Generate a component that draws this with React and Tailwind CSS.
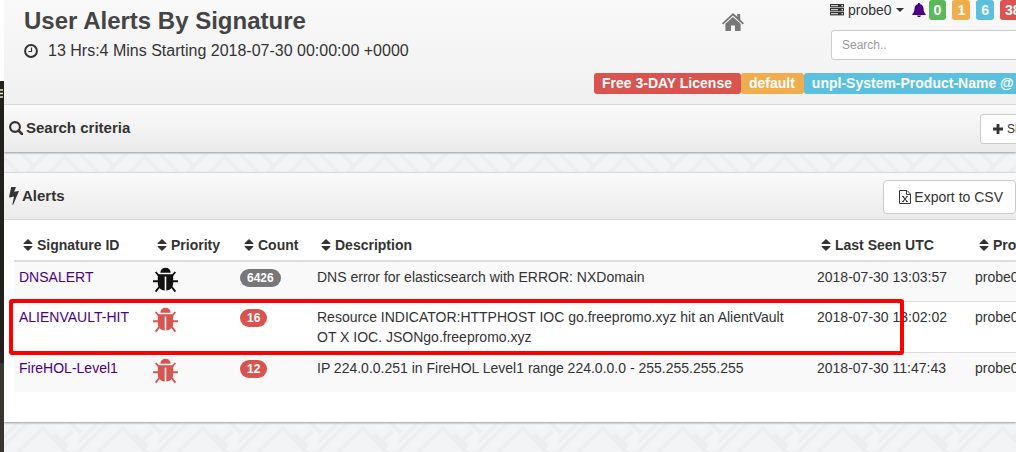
import React from "react";

const PANEL_HEAD =
  "flex items-center justify-between border-t border-[#d9d9d9] bg-linear-to-b from-[#fafafa] to-[#ebebeb]";
const PANEL_SHADOW = "shadow-[0_1px_2px_#999999]";

function ClockIcon() {
  return (
    <svg viewBox="0 0 14 14" className="size-3.5 shrink-0" fill="none" stroke="currentColor" aria-hidden="true">
      <circle cx="7" cy="7" r="5.9" strokeWidth="2" />
      <path d="M7.5 3.5v4H4.5" strokeWidth="1.2" />
    </svg>
  );
}

function HomeIcon() {
  return (
    <svg viewBox="0 0 22 18" className="h-[18px] w-[22px]" fill="currentColor" aria-hidden="true">
      <path d="M11 0 L15.2 3.8 V1 H18.2 V6.6 L22 10.2 L20.8 11.4 L11 2.6 L1.2 11.4 L0 10.2 Z" />
      <path d="M11 4 L18.6 10.8 V18 H13 V12.5 H9 V18 H3.4 V10.8 Z" />
    </svg>
  );
}

function ServerIcon() {
  return (
    <svg viewBox="0 0 14 12" className="h-3 w-3.5 shrink-0" aria-hidden="true">
      {[0, 4, 8].map((y) => (
        <g key={y}>
          <rect x="0" y={y} width="14" height="3.4" fill="#333" />
          <rect x="1" y={y + 1.2} width="7" height="1" fill="#eee" />
          <rect x="11.5" y={y + 1} width="1.4" height="1.4" fill="#eee" />
        </g>
      ))}
    </svg>
  );
}

function BellIcon() {
  return (
    <svg viewBox="0 0 14 14" className="size-3.5 shrink-0" fill="#4b0082" aria-hidden="true">
      <path d="M7 0c.8 0 1.2.5 1.2 1.2C10.4 1.8 11.2 3.2 11.4 5l.5 3.2c.2 1.200 1 2 1.800 2.800v1H.3v-1c.8-.8 1.600-1.600 1.800-2.800L2.600 5C2.800 3.200 3.600 1.800 5.800 1.200 5.800.5 6.200 0 7 0z" />
      <path d="M5 12.500h4c-.2 1-1 1.500-2 1.500s-1.800-.5-2-1.500z" />
    </svg>
  );
}

function SearchIcon() {
  return (
    <svg viewBox="0 0 14 14" className="size-3.5 shrink-0" fill="none" stroke="currentColor" aria-hidden="true">
      <circle cx="6" cy="6" r="4.900" strokeWidth="2.100" />
      <path d="M9.500 9.500 13 13" strokeWidth="2.500" strokeLinecap="round" />
    </svg>
  );
}

function BoltIcon() {
  return (
    <svg viewBox="0 0 10 18" className="h-[18px] w-2.5 shrink-0" fill="currentColor" aria-hidden="true">
      <path d="M2.200 0H7L5.200 4.800l4.200-.9c.4 0 .6.300.4.7L4.200 17.700c-.2.400-.9.300-.8-.2L5 9.400.7 10.400c-.4 0-.7-.2-.6-.6z" />
    </svg>
  );
}

function PlusIcon() {
  return (
    <svg viewBox="0 0 10 10" className="size-2.5 shrink-0" fill="currentColor" aria-hidden="true">
      <path d="M3.600 0h2.800v3.600H10v2.800H6.400V10H3.600V6.400H0V3.600h3.600z" />
    </svg>
  );
}

function ExcelIcon() {
  return (
    <svg viewBox="0 0 12 14" className="h-3.5 w-3 shrink-0" fill="none" stroke="currentColor" aria-hidden="true">
      <path d="M.5 .5H8L11.500 4V13.500H.5z" />
      <path d="M7.500.5V4.500H11.500" />
      <path d="M4 6.500 8 11.500M8 6.500 4 11.500" strokeWidth="1.200" />
      <path d="M3 6.500h2M7 6.500h2M3 11.500h2M7 11.500h2" strokeWidth=".8" />
    </svg>
  );
}

function SortIcon() {
  return (
    <svg viewBox="0 0 10 12" className="h-3 w-2.5 shrink-0" fill="currentColor" aria-hidden="true">
      <path d="M5 0 9.400 4.300V5H.6v-.7zM5 12 .6 7.700V7h8.800v.7z" />
    </svg>
  );
}

function BugIcon({ className }) {
  return (
    <svg viewBox="0 0 26 26" className={"mb-[3px] h-[26px] w-[26px] " + className} fill="currentColor" aria-hidden="true">
      <path d="M7.300 5.800C7.600 2.600 9.600.8 12.500.8s4.900 1.800 5.200 5z" />
      <path d="M4.800 7.200H20.200V16c0 4.400-2.400 7-6.900 7.600V9.600h-1.600v14C7.200 23 4.800 20.400 4.800 16z" />
      <path
        d="M6 9 2.700 5M19 9 22.300 5M5 14.300H0M20 14.300h5M6.200 20 2.600 24.600M18.800 20l3.600 4.600"
        fill="none"
        stroke="currentColor"
        strokeWidth="1.900"
      />
    </svg>
  );
}

const WEAVE_OFFSETS = [-80, 0, 80].flatMap((x) => [0, 80].map((y) => ({ x, y })));

function Backdrop() {
  return (
    <svg className="absolute inset-0 h-full w-full" aria-hidden="true">
      <defs>
        <pattern id="weave" x="-4" width="80" height="80" patternUnits="userSpaceOnUse">
          <g fill="none" stroke="#edeef0" strokeWidth="4">
            {WEAVE_OFFSETS.map(({ x, y }) => (
              <path
                key={x + ":" + y}
                transform={`translate(${x} ${y})`}
                d="M-4 54 30 20M14 56 43 28 70 56M54 34 67 47M60 42 73 31M66 18 81 33M78 43 101 20M1 -5 18 12M20 -8 35 7M27 13 48 -8M47 15 65 -3 83 15"
              />
            ))}
          </g>
        </pattern>
      </defs>
      <rect width="100%" height="100%" fill="#f3f4f6" />
      <rect width="100%" height="100%" fill="url(#weave)" />
    </svg>
  );
}

function Sidebar() {
  return (
    <nav aria-label="Main menu" className="flex w-1 shrink-0 flex-col">
      <div className="h-[81px] bg-[#fdfdfd]" />
      <div className="h-[282px] bg-[#22201c] pt-2">
        <svg viewBox="0 0 4 9" className="h-[9px] w-1" stroke="#e8e4c8" strokeWidth="1.500" aria-hidden="true">
          <path d="M0 1h3M0 4.500h3M0 8h3" />
        </svg>
      </div>
      <div className="flex-1 bg-[#383530]" />
    </nav>
  );
}

const COUNTERS = [
  { value: "0", color: "bg-[#5cb85c]" },
  { value: "1", color: "bg-[#f0ad4e]" },
  { value: "6", color: "bg-[#5bc0de]" },
  { value: "38", color: "bg-[#d9534f]" },
];

const LABELS = [
  { text: "Free 3-DAY License", color: "bg-[#d9534f]" },
  { text: "default", color: "bg-[#f0ad4e]" },
  { text: "unpl-System-Product-Name @", color: "bg-[#5bc0de]" },
];

function Header() {
  return (
    <header className="bg-linear-to-b from-[#f9f9f9] to-[#f0f0f0] pb-2.5">
      <div className="flex h-[60px]">
        <div className="min-w-0 flex-1 pl-5 whitespace-nowrap">
          <h1 className="pt-1 text-2xl leading-[33px] font-bold text-[#444]">User Alerts By Signature</h1>
          <p className="flex items-center gap-2.5 text-base leading-7">
            <ClockIcon />
            13 Hrs:4 Mins Starting 2018-07-30 00:00:00 +0000
          </p>
        </div>
        <a href="#home" aria-label="Home" className="mt-[13px] mr-[86px] h-fit text-[#777]">
          <HomeIcon />
        </a>
        <div className="w-[186px] shrink-0 overflow-hidden">
          <div className="flex h-5 items-center">
            <button type="button" className="flex items-center gap-1">
              <ServerIcon />
              probe0
              <svg viewBox="0 0 8 4" className="h-1 w-2" fill="currentColor" aria-hidden="true">
                <path d="M0 0h8L4 4z" />
              </svg>
            </button>
            <a href="#notifications" aria-label="Notifications" className="mr-[3px] ml-2">
              <BellIcon />
            </a>
            <div className="flex gap-1.5">
              {COUNTERS.map((c) => (
                <span key={c.value} className={"rounded-[3px] px-[5px] font-bold text-white " + c.color}>
                  {c.value}
                </span>
              ))}
            </div>
          </div>
          <input
            type="search"
            aria-label="Search"
            placeholder="Search.."
            className="mt-2.5 ml-px h-[30px] w-[220px] rounded-[3px] border border-[#ccc] bg-white px-2.5 text-xs placeholder:text-[#999]"
          />
        </div>
      </div>
      <div className="mt-[13px] ml-auto flex w-[422px] overflow-hidden whitespace-nowrap">
        {LABELS.map((l) => (
          <span key={l.text} className={"shrink-0 rounded-[3px] pr-[9px] pl-2 leading-[21px] font-bold text-white " + l.color}>
            {l.text}
          </span>
        ))}
      </div>
    </header>
  );
}

const COLUMNS = [
  { title: "Signature ID", width: "w-[134px]" },
  { title: "Priority", width: "w-[87px]" },
  { title: "Count", width: "w-[77px]" },
  { title: "Description", width: "" },
  { title: "Last Seen UTC", width: "w-[158px]" },
  { title: "Probe", width: "w-[80px]" },
];

const ROWS = [
  {
    id: "DNSALERT",
    bug: "text-[#111]",
    badge: "bg-[#777]",
    count: "6426",
    text: "DNS error for elasticsearch with ERROR: NXDomain",
    seen: "2018-07-30 13:03:57",
  },
  {
    id: "ALIENVAULT-HIT",
    bug: "text-[#d9534f]",
    badge: "bg-[#d9534f]",
    count: "16",
    text: "Resource INDICATOR:HTTPHOST IOC go.freepromo.xyz hit an AlientVault OT X IOC. JSONgo.freepromo.xyz",
    seen: "2018-07-30 13:02:02",
  },
  {
    id: "FireHOL-Level1",
    bug: "text-[#d9534f]",
    badge: "bg-[#d9534f]",
    count: "12",
    text: "IP 224.0.0.251 in FireHOL Level1 range 224.0.0.0 - 255.255.255.255",
    seen: "2018-07-30 11:47:43",
  },
];

function AlertsTable() {
  return (
    <div className="-mr-[34px]">
      <table className="w-full table-fixed border-collapse text-left">
        <thead>
          <tr className="border-b-2 border-[#ddd]">
            {COLUMNS.map((c) => (
              <th key={c.title} className={"py-[5px] pr-1 pl-[9px] font-bold " + c.width}>
                <button type="button" className="flex items-center gap-1 whitespace-nowrap">
                  <SortIcon />
                  {c.title}
                </button>
              </th>
            ))}
          </tr>
        </thead>
        <tbody>
          {ROWS.map((r) => (
            <tr key={r.id} className="border-[#ddd] align-top odd:bg-[#f9f9f9] not-first:border-t">
              <td className="p-[5px] whitespace-nowrap">
                <a href={"#" + r.id} className="text-[#4b0082]">
                  {r.id}
                </a>
              </td>
              <td className="p-[5px]">
                <BugIcon className={r.bug} />
              </td>
              <td className="p-[5px]">
                <span className={"mt-0.5 inline-block rounded-full px-[7px] text-xs leading-[18px] font-bold text-white " + r.badge}>
                  {r.count}
                </span>
              </td>
              <td className="p-[5px] pr-3">{r.text}</td>
              <td className="p-[5px] whitespace-nowrap">{r.seen}</td>
              <td className="p-[5px]">probe0</td>
            </tr>
          ))}
        </tbody>
      </table>
    </div>
  );
}

export default function App() {
  return (
    <div className="flex min-h-screen overflow-hidden font-['Liberation_Sans',Arial,sans-serif] text-sm leading-5 text-[#333]">
      <Sidebar />
      <main className="relative min-w-0 flex-1 overflow-hidden">
        <Backdrop />
        <div className="relative flex flex-col gap-5">
          <div className={PANEL_SHADOW}>
            <Header />
            <section className={PANEL_HEAD + " h-12 overflow-hidden"}>
              <h2 className="flex items-center gap-[3px] pb-0.5 pl-[5px] text-[15px] font-bold">
                <SearchIcon />
                Search criteria
              </h2>
              <div className="w-9 overflow-hidden">
                <button
                  type="button"
                  className="flex h-[30px] w-20 items-center gap-1 rounded-[3px] border border-[#ccc] bg-white pl-3 text-xs"
                >
                  <PlusIcon />
                  Show
                </button>
              </div>
            </section>
          </div>
          <section className={PANEL_SHADOW + " bg-white"}>
            <div className={PANEL_HEAD + " h-12 border-b"}>
              <h2 className="flex items-center gap-[3px] pl-[5px] text-[15px] font-bold">
                <BoltIcon />
                Alerts
              </h2>
              <button
                type="button"
                className="mt-0.5 flex h-[34px] items-center gap-[3px] rounded border border-[#ccc] bg-white pr-3 pl-[15px]"
              >
                <ExcelIcon />
                Export to CSV
              </button>
            </div>
            <div className="relative pt-2.5 pb-[30px] pl-2.5">
              <AlertsTable />
              <div className="pointer-events-none absolute top-[79px] right-[112px] left-[5px] h-14 rounded-[3px] border-4 border-[#ff0000]" />
            </div>
          </section>
        </div>
      </main>
    </div>
  );
}
